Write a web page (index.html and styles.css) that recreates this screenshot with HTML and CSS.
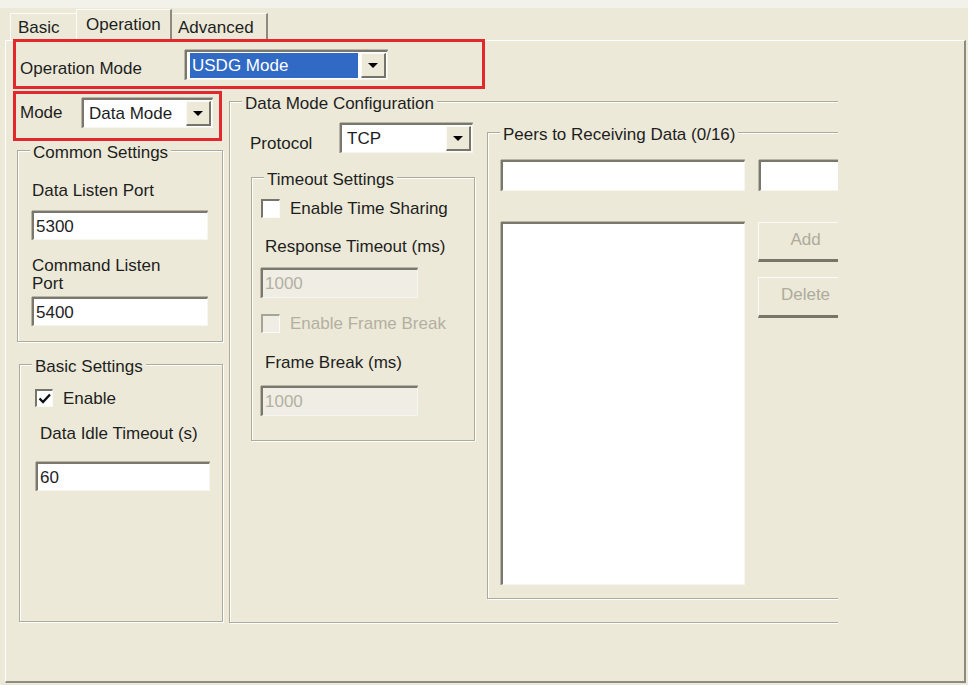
FILE: index.html
```html
<!DOCTYPE html>
<html lang="en">
<head>
  <meta charset="UTF-8" />
  <meta name="viewport" content="width=device-width, initial-scale=1.0"/>
  <title>Operation</title>
  <link rel="stylesheet" href="styles.css">
</head>
<body>
  <div class="window">
    <nav class="tabs">
      <div class="tab tab-basic">Basic</div>
      <div class="tab tab-op active">Operation</div>
      <div class="tab tab-adv">Advanced</div>
    </nav>

    <main class="panel">
      <div class="mark op-row">
        <span class="lbl op-lbl">Operation Mode</span>
        <div class="combo combo-op">
          <span class="combo-value selected">USDG Mode</span>
          <span class="combo-btn"><i class="arrow"></i></span>
        </div>
      </div>

      <div class="panel-body">
        <div class="col-left">
          <div class="mark mode-row">
            <span class="lbl mode-lbl">Mode</span>
            <div class="combo combo-mode">
              <span class="combo-value">Data Mode</span>
              <span class="combo-btn"><i class="arrow"></i></span>
            </div>
          </div>

          <fieldset class="group common">
            <legend>Common Settings</legend>
            <div class="lbl data-port-lbl">Data Listen Port</div>
            <div class="field data-port">5300</div>
            <div class="lbl cmd-port-lbl">Command Listen Port</div>
            <div class="field cmd-port">5400</div>
          </fieldset>

          <fieldset class="group basic">
            <legend>Basic Settings</legend>
            <div class="check-row enable-row">
              <span class="check checked">
                <svg viewBox="0 0 16 16" width="16" height="16"><path d="M2.5 7.5 L6 11 L13 3.5" fill="none" stroke="#111" stroke-width="2.4"/></svg>
              </span>
              <span class="check-text">Enable</span>
            </div>
            <div class="lbl idle-lbl">Data Idle Timeout (s)</div>
            <div class="field idle">60</div>
          </fieldset>
        </div>

        <div class="clip">
          <fieldset class="group datamode">
            <legend>Data Mode Configuration</legend>
            <div class="dm-body">
              <div class="dm-left">
                <div class="proto-row">
                  <span class="lbl proto-lbl">Protocol</span>
                  <div class="combo combo-tcp">
                    <span class="combo-value">TCP</span>
                    <span class="combo-btn"><i class="arrow"></i></span>
                  </div>
                </div>

                <fieldset class="group timeout">
                  <legend>Timeout Settings</legend>
                  <div class="check-row share-row">
                    <span class="check"></span>
                    <span class="check-text">Enable Time Sharing</span>
                  </div>
                  <div class="lbl resp-lbl">Response Timeout (ms)</div>
                  <div class="field disabled resp">1000</div>
                  <div class="check-row break-row">
                    <span class="check disabled"></span>
                    <span class="check-text muted">Enable Frame Break</span>
                  </div>
                  <div class="lbl frame-lbl">Frame Break (ms)</div>
                  <div class="field disabled frame">1000</div>
                </fieldset>
              </div>

              <fieldset class="group peers">
                <legend>Peers to Receiving Data (0/16)</legend>
                <div class="peer-inputs">
                  <div class="field peer-ip"></div>
                  <div class="field peer-port"></div>
                </div>
                <div class="peer-list-row">
                  <div class="field peer-list"></div>
                  <div class="peer-btns">
                    <div class="btn">Add</div>
                    <div class="btn btn-delete">Delete</div>
                  </div>
                </div>
              </fieldset>
            </div>
          </fieldset>
        </div>
      </div>
    </main>
  </div>
</body>
</html>
```

FILE: styles.css
```css
body {
  margin: 0;
  background: #ece9d8;
  font-family: "Liberation Sans", Arial, sans-serif;
  font-size: 17px;
  color: #1e1e1e;
}

.window {
  height: 685px;
  box-sizing: border-box;
  border-top: 8px solid #f2f1ea;
  padding: 4px 2px 2px 5px;
  display: flex;
  flex-direction: column;
}

/* tab strip */
.tabs {
  display: flex;
  align-items: flex-start;
  height: 29px;
  padding-left: 5px;
  margin-bottom: -1px;
  position: relative;
  z-index: 1;
}

.tab {
  box-sizing: border-box;
  height: 27px;
  margin-top: 1px;
  padding-top: 4px;
  line-height: 20px;
  background: #ece9d8;
  border-top: 1px solid #fbfaf4;
  border-left: 1px solid #fbfaf4;
}

.tab-basic {
  width: 66px;
  padding-left: 7px;
}

.tab-op {
  width: 96px;
  padding-left: 9px;
}

.tab-adv {
  width: 96px;
  padding-left: 6px;
  border-left: none;
  border-right: 2px solid #8d8b7f;
}

.tab.active {
  height: 32px;
  margin-top: -3px;
  padding-top: 5px;
  border-right: 2px solid #8d8b7f;
}

/* page under the tabs */
.panel {
  flex: 1;
  border-top: 1px solid #fff;
  border-left: 1px solid #fff;
  border-right: 2px solid #8d8b7f;
  border-bottom: 2px solid #8d8b7f;
}

.lbl {
  line-height: 20px;
  white-space: nowrap;
}

.mark {
  box-sizing: border-box;
  border: 3px solid #e0282d;
  position: relative;
  z-index: 2;
}

.op-row {
  display: flex;
  align-items: flex-start;
  width: 472px;
  height: 50px;
  margin: -2px 0 0 7px;
  padding: 8px 0 0 4px;
}

.op-lbl {
  width: 165px;
  margin-top: 9px;
}

.panel-body {
  display: flex;
  align-items: flex-start;
}

.col-left {
  width: 209px;
  margin-left: 7px;
}

.mode-row {
  display: flex;
  align-items: flex-start;
  height: 50px;
  margin-top: 2px;
  padding: 4px 0 0 4px;
}

.mode-lbl {
  width: 62px;
  margin-top: 5px;
}

/* combo boxes */
.combo {
  box-sizing: border-box;
  display: flex;
  height: 30px;
  padding: 1px;
  background: #fff;
  border-style: solid;
  border-width: 2px 1px 1px 2px;
  border-color: #7a786c #f6f5f0 #f6f5f0 #7a786c;
  box-shadow: 0 -1px 0 #b9b6a8, -1px 0 0 #b9b6a8;
}

.combo-op {
  width: 203px;
}

.combo-mode {
  width: 131px;
}

.combo-tcp {
  width: 133px;
}

.combo-value {
  flex: 1;
  line-height: 25px;
  padding-left: 4px;
  white-space: nowrap;
}

.combo-value.selected {
  margin: 0 3px 0 2px;
  padding-left: 2px;
  background: #316ac5;
  color: #fff;
}

.combo-btn {
  box-sizing: border-box;
  width: 25px;
  height: 25px;
  display: flex;
  align-items: center;
  justify-content: center;
  background: #ece9d8;
  border-style: solid;
  border-width: 1px 2px 2px 1px;
  border-color: #fbfaf4 #77756a #77756a #fbfaf4;
}

.arrow {
  width: 0;
  height: 0;
  border-left: 5px solid transparent;
  border-right: 5px solid transparent;
  border-top: 5px solid #000;
}

/* group boxes */
.group {
  margin: 0;
  padding: 0;
  min-width: 0;
  border: 1px solid #aeab9b;
  box-shadow: inset 1px 1px 0 #fff, 1px 1px 0 #fff;
}

.group legend {
  margin-left: 12px;
  padding: 6px 3px 0;
  line-height: 14px;
  background: #ece9d8;
  white-space: nowrap;
}

/* text boxes */
.field {
  box-sizing: border-box;
  height: 29px;
  padding: 4px 2px 0;
  line-height: 20px;
  background: #fff;
  border-style: solid;
  border-width: 2px 1px 1px 2px;
  border-color: #7a786c #f6f5f0 #f6f5f0 #7a786c;
  box-shadow: 0 -1px 0 #b9b6a8, -1px 0 0 #b9b6a8;
}

.field.disabled {
  height: 30px;
  background: #efede4;
  color: #b3b0a2;
}

/* check boxes */
.check-row {
  display: flex;
  align-items: flex-start;
}

.check {
  box-sizing: border-box;
  width: 19px;
  height: 19px;
  background: #fff;
  border-style: solid;
  border-width: 2px 1px 1px 2px;
  border-color: #77756a #fbfaf5 #fbfaf5 #77756a;
}

.check svg {
  display: block;
}

.check.disabled {
  background: #efede4;
  border-color: #a8a596 #fbfaf5 #fbfaf5 #a8a596;
}

.check-text {
  margin-left: 10px;
  line-height: 20px;
  white-space: nowrap;
}

.check-text.muted {
  color: #b3b0a2;
}

/* common settings */
.common {
  width: 204px;
  margin: -1px 0 0 4px;
  padding-bottom: 15px;
}

.data-port-lbl {
  margin: 21px 0 0 14px;
}

.data-port,
.cmd-port {
  width: 176px;
  margin-left: 14px;
}

.data-port {
  margin-top: 10px;
}

.cmd-port-lbl {
  width: 140px;
  margin: 17px 0 0 14px;
  line-height: 18px;
  white-space: normal;
}

.cmd-port {
  margin-top: 4px;
}

/* basic settings */
.basic {
  width: 202px;
  margin: 12px 0 0 6px;
  padding-bottom: 130px;
}

.enable-row {
  margin: 15px 0 0 15px;
}

.enable-row .check {
  width: 18px;
  height: 18px;
}

.idle-lbl {
  margin: 15px 0 0 20px;
}

.idle {
  width: 174px;
  margin: 18px 0 0 16px;
}

/* data mode configuration */
.clip {
  width: 609px;
  margin-left: 7px;
  padding-bottom: 2px;
  overflow: hidden;
}

.datamode {
  width: 700px;
  margin-top: 2px;
  padding-bottom: 23px;
}

.dm-body {
  display: flex;
  align-items: flex-start;
}

.dm-left {
  width: 223px;
  margin-left: 20px;
}

.proto-row {
  display: flex;
  align-items: flex-start;
  margin-top: 12px;
}

.proto-lbl {
  width: 90px;
  margin-top: 11px;
}

.timeout {
  width: 222px;
  margin: 13px 0 0 1px;
  padding-bottom: 24px;
}

.share-row {
  margin: 12px 0 0 9px;
}

.resp-lbl {
  margin: 18px 0 0 13px;
}

.resp,
.frame {
  width: 157px;
  margin-left: 9px;
}

.resp {
  margin-top: 11px;
}

.break-row {
  margin: 16px 0 0 9px;
}

.frame-lbl {
  margin: 19px 0 0 13px;
}

.frame {
  margin-top: 13px;
}

/* peers list */
.peers {
  width: 420px;
  margin: 11px 0 0 14px;
  padding-bottom: 13px;
}

.peer-inputs {
  display: flex;
  margin: 18px 0 0 13px;
}

.peer-ip {
  width: 244px;
  height: 31px;
}

.peer-port {
  width: 120px;
  height: 31px;
  margin-left: 14px;
}

.peer-list-row {
  display: flex;
  align-items: flex-start;
  margin: 31px 0 0 13px;
}

.peer-list {
  width: 244px;
  height: 363px;
}

.peer-btns {
  margin-left: 13px;
}

.btn {
  box-sizing: border-box;
  width: 96px;
  height: 40px;
  padding-bottom: 3px;
  display: flex;
  align-items: center;
  justify-content: center;
  color: #aeab9c;
  border-style: solid;
  border-width: 1px 2px 3px 1px;
  border-color: #fbfaf5 #77756a #77756a #fbfaf5;
}

.btn-delete {
  height: 41px;
  margin-top: 15px;
}
```
